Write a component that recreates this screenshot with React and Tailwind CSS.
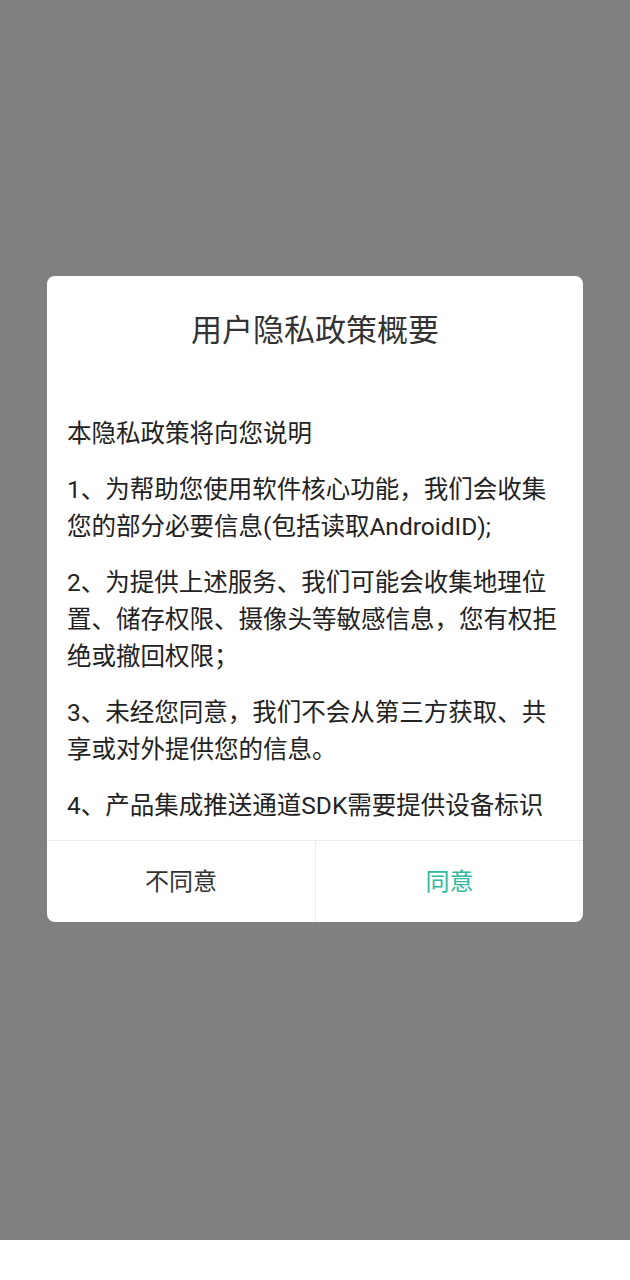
import React from 'react';

// only the part the dialog shows before scrolling
const paragraphs = [
  '本隐私政策将向您说明',
  '1、为帮助您使用软件核心功能，我们会收集您的部分必要信息(包括读取AndroidID);',
  '2、为提供上述服务、我们可能会收集地理位置、储存权限、摄像头等敏感信息，您有权拒绝或撤回权限；',
  '3、未经您同意，我们不会从第三方获取、共享或对外提供您的信息。',
  '4、产品集成推送通道SDK需要提供设备标识',
];

export default function App() {
  return (
    <div className="w-[630px] min-h-[1280px] bg-white font-['Roboto','Noto_Sans_CJK_SC',sans-serif]">
      <div className="h-[1240px] bg-[#808080] pt-[276px]">
        {/* dialog */}
        <div className="mx-auto flex w-[536px] flex-col overflow-hidden rounded-lg bg-white">
          <h1 className="pt-[35px] text-center text-[31px] font-normal leading-[40px] text-[#333333]">
            用户隐私政策概要
          </h1>
          <div className="h-[475px] overflow-y-auto px-5 pt-[64px]">
            {paragraphs.map((p, i) => (
              <p key={i} className="mb-[19px] text-[24.5px] leading-[37px] text-[#222222]">
                {p}
              </p>
            ))}
          </div>
          <div className="mt-[14px] grid h-[82px] grid-cols-2 border-t border-[#ececec]">
            <button className="text-[24px] text-[#333333]" type="button">
              不同意
            </button>
            <button className="border-l border-[#ececec] text-[24px] text-[#30b9a0]" type="button">
              同意
            </button>
          </div>
        </div>
      </div>
    </div>
  );
}
